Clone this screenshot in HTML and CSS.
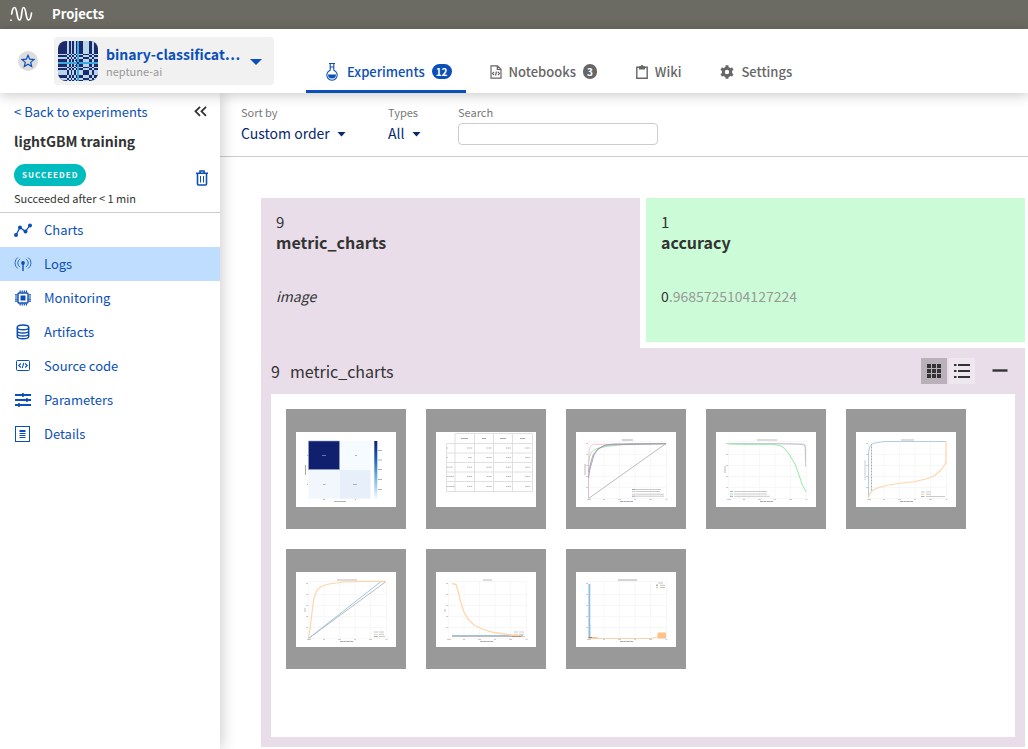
FILE: index.html
```html
<!DOCTYPE html>
<html lang="en">
<head>
<meta charset="utf-8">
<meta name="viewport" content="width=device-width, initial-scale=1">
<title>lightGBM training - Logs</title>
<link rel="stylesheet" href="styles.css">
</head>
<body>
<svg class="defs" aria-hidden="true">
  <defs>
    <linearGradient id="blues" x1="0" y1="0" x2="0" y2="1">
      <stop offset="0" stop-color="#10206e"/><stop offset=".3" stop-color="#1460b4"/><stop offset=".6" stop-color="#69aee0"/><stop offset="1" stop-color="#f5faff"/>
    </linearGradient>
    <symbol id="axes" viewBox="0 0 100 75">
      <path d="M12.5 9.5H90.5V66.5H12.5ZM28 9.5V66.5M43.5 9.5V66.5M59 9.5V66.5M74.500 9.5V66.5M12.5 22.500H90.5M12.5 33.500H90.5M12.5 44.500H90.5M12.5 55.500H90.5" fill="none" stroke="#f5f5f5" stroke-width=".8"/>
      <path d="M10 11.500h2M10 22.500h2M10 33.500h2M10 44.500h2M10 55.500h2M11 67.500h4M27 67.500h2M42 67.500h3M58 67.500h2M73 67.500h3M89.500 67.500h2" stroke="#ccc" stroke-width="1"/>
      <path d="M44 69.500h13" stroke="#aaa" stroke-dasharray="3 .4"/>
    </symbol>
  </defs>
</svg>
<header class="topbar">
  <svg class="brand" viewBox="0 0 24 16" aria-hidden="true"><path d="M2 14v.2M2.700 8C3.200 4 4 1.500 5.500 1.500C8.500 1.500 7.500 14 10.500 14C13.500 14 12 1.500 14.500 1.500C17.500 1.500 16.500 14 19.500 14C21.500 14 22 11 22.500 7" fill="none" stroke="#fff" stroke-width="1.700" stroke-linecap="round"/></svg>
  <a class="topbar-link" href="#">Projects</a>
</header>
<nav class="project-bar">
  <button class="star" aria-label="Star project"><svg width="14" height="14" viewBox="0 0 14 14"><path d="M7 1.300L8.700 5.200L12.900 5.600L9.700 8.400L10.700 12.500L7 10.300L3.300 12.500L4.300 8.400L1.100 5.600L5.300 5.200Z" fill="none" stroke="#0b4fb8" stroke-width="1.200"/></svg></button>
  <button class="project">
    <svg class="avatar" viewBox="0 0 40 40" aria-hidden="true">
      <rect width="40" height="40" fill="#1b2a6b"/>
      <path fill="#b9d5ea" fill-rule="evenodd" d="M9 0h2v40h-2zM13 0h1v40h-1zM16 0h2v40h-2zM25 0h6v40h-6zM34 0h2v40h-2zM0 13h40v1h-40zM0 16h40v2h-40zM0 26h40v1h-40zM0 29h40v5h-40zM0 37h40v2h-40z"/>
      <path fill="#3ba9dd" d="M19 0h2v40h-2zM0 21h40v2h-40z"/>
      <path stroke="#1b2a6b" d="M17 19L23 25M23 19L17 25"/>
    </svg>
    <span class="project-text"><span class="project-name">binary-classificat…</span><span class="project-org">neptune-ai</span></span>
    <span class="caret"></span>
  </button>
  <div class="tabs">
    <a class="tab active" href="#"><svg width="16" height="20" viewBox="0 0 16 20"><path d="M5 1.500h6M6.200 1.500v6.700a5.200 5.200 0 1 0 3.600 0V1.500M6.500 5h3" fill="none" stroke="currentColor" stroke-width="1.100"/><path d="M4 12.500h8a4 4 0 0 1-8 0z" fill="currentColor"/></svg><span>Experiments</span><span class="badge">12</span></a>
    <a class="tab" href="#"><svg width="12" height="14" viewBox="0 0 12 14"><path d="M1 .8h6.500L11 4.300V13.200H1zM7.300 1v3.500H11M4 7L2.600 8.500L4 10M8 7L9.400 8.500L8 10M6.500 6.500L5.500 10.500" fill="none" stroke="currentColor" stroke-width="1.200"/></svg><span>Notebooks</span><span class="badge">3</span></a>
    <a class="tab" href="#"><svg width="12" height="14" viewBox="0 0 12 14"><path d="M.8 2.200h10.400v11H.8z" fill="none" stroke="currentColor" stroke-width="1.400"/><path d="M3 1.300h1.700a1.300 1.300 0 0 1 2.600 0H9V4.500H3z" fill="currentColor"/></svg><span>Wiki</span></a>
    <a class="tab" href="#"><svg width="14" height="14" viewBox="0 0 14 14"><g fill="none" stroke="currentColor"><circle cx="7" cy="7" r="3.700" stroke-width="3"/><path d="M7 .3v2.200M7 11.500v2.200M1.200 3.650l1.900 1.100M10.900 9.250l1.900 1.100M1.200 10.350l1.900-1.100M10.900 4.750l1.900-1.100" stroke-width="3"/></g></svg><span>Settings</span></a>
  </div>
</nav>
<div class="layout">
  <aside class="sidebar">
    <div class="run">
      <div class="row"><a class="back" href="#">&lt; Back to experiments</a><button class="icon-btn" aria-label="Collapse sidebar"><svg width="14" height="12" viewBox="0 0 14 12"><path d="M6 .8L1.500 5.300L6 9.800M12 .8L7.500 5.300L12 9.800" fill="none" stroke="#333" stroke-width="1.800"/></svg></button></div>
      <h1>lightGBM training</h1>
      <div class="row"><span class="status">SUCCEEDED</span><button class="icon-btn delete" aria-label="Delete"><svg width="12" height="16" viewBox="0 0 12 16"><path d="M0 3.200h12M4 2.800V1h4v1.800M1.500 3.500V14q0 1 1 1h7q1 0 1-1V3.500" fill="none" stroke="#0b4fb8" stroke-width="1.600"/><path d="M4.500 6v6.500M7.500 6v6.500" stroke="#0b4fb8"/></svg></button></div>
      <p>Succeeded after &lt; 1 min</p>
    </div>
    <nav class="menu">
      <a href="#"><svg viewBox="0 0 18 16"><path d="M2 13L6 5.500L11.500 9.500L16 3" fill="none" stroke="currentColor" stroke-width="1.300"/><g fill="currentColor"><circle cx="2" cy="13" r="2"/><circle cx="6" cy="5.500" r="2"/><circle cx="11.500" cy="9.500" r="2"/><circle cx="16" cy="3.500" r="2"/></g></svg><span>Charts</span></a>
      <a class="current" href="#"><svg viewBox="0 0 18 16"><circle cx="9" cy="7" r="1.900" fill="currentColor"/><path d="M9 7v8" stroke="currentColor" stroke-width="1.400"/><path d="M6.200 11a4.500 4.500 0 0 1 0-8M11.800 11a4.500 4.500 0 0 0 0-8M3.800 12.500a6.800 6.800 0 0 1 0-11M14.200 12.500a6.800 6.800 0 0 0 0-11" fill="none" stroke="currentColor" stroke-width=".8"/></svg><span>Logs</span></a>
      <a href="#"><svg viewBox="0 0 18 16"><path d="M6.500 5.500h5v5h-5z" fill="currentColor"/><rect x="4" y="3" width="10" height="10" rx="1" fill="none" stroke="currentColor" stroke-width="1.400"/><path d="M5.500 1.500h7.500M5.500 14.500h7.500" stroke="currentColor" stroke-width="2" stroke-dasharray="1.200 .9"/><path d="M2.300 4.300v8M15.700 4.300v8" stroke="currentColor" stroke-width="2.600" stroke-dasharray="1.200 .9"/></svg><span>Monitoring</span></a>
      <a href="#"><svg viewBox="0 0 18 16"><g fill="none" stroke="currentColor" stroke-width="1.500"><ellipse cx="9" cy="3.400" rx="5.700" ry="2.300"/><path d="M3.300 3.400v9.200c0 3 11.400 3 11.400 0V3.400M3.300 6.700c0 3 11.400 3 11.400 0M3.300 9.700c0 3 11.400 3 11.400 0"/></g></svg><span>Artifacts</span></a>
      <a href="#"><svg viewBox="0 0 18 16"><rect x="2.500" y="2.500" width="13" height="10" rx="1" fill="none" stroke="currentColor"/><path d="M6.800 5.500L4.800 7.500L6.800 9.500M11.200 5.500L13.200 7.500L11.200 9.500M9.800 4.800L8.200 10.200" fill="none" stroke="currentColor" stroke-width="1.100"/></svg><span>Source code</span></a>
      <a href="#"><svg viewBox="0 0 18 16"><path d="M1 3h16M1 8h16M1 13h16" stroke="currentColor" stroke-width="2"/><path d="M9 1v4M13 6v4M5 11v4" stroke="currentColor" stroke-width="1.600"/></svg><span>Parameters</span></a>
      <a href="#"><svg viewBox="0 0 18 16"><rect x="1.500" y=".5" width="14" height="15" fill="none" stroke="currentColor"/><path d="M5.500 5h6" stroke="currentColor" stroke-width="2"/><path d="M5.500 7.500h6M5.500 9.500h6M5.500 11.500h6" stroke="currentColor"/></svg><span>Details</span></a>
    </nav>
  </aside>
  <main>
    <form class="filters">
      <div class="field"><label for="sort">Sort by</label><div class="select"><select id="sort"><option>Custom order</option></select><span class="caret small"></span></div></div>
      <div class="field types"><label for="types">Types</label><div class="select"><select id="types"><option>All</option></select><span class="caret small"></span></div></div>
      <div class="field"><label for="search">Search</label><input id="search" type="text"></div>
    </form>
    <div class="content">
      <div class="cards">
        <section class="card open"><span class="count">9</span><h2>metric_charts</h2><em>image</em></section>
        <section class="card green"><span class="count">1</span><h2>accuracy</h2><span class="value">0<small>.9685725104127224</small></span></section>
      </div>
      <section class="panel">
        <div class="panel-head">
          <h3><span>9</span><span>metric_charts</span></h3>
          <button class="view on" aria-label="Grid view"><svg width="14" height="14" viewBox="0 0 14 14"><path d="M0 0h4v4H0zM5 0h4v4H5zM10 0h4v4h-4zM0 5h4v4H0zM5 5h4v4H5zM10 5h4v4h-4zM0 10h4v4H0zM5 10h4v4H5zM10 10h4v4h-4z" fill="#333"/></svg></button>
          <button class="view" aria-label="List view"><svg width="16" height="14" viewBox="0 0 16 14"><path d="M0 1h2.500M4 1h12M0 7h2.500M4 7h12M0 13h2.500M4 13h12" stroke="#333" stroke-width="2"/></svg></button>
          <button class="minimize" aria-label="Minimize"><svg width="16" height="4" viewBox="0 0 16 4"><path d="M.5 1.500h15" stroke="#333" stroke-width="2.400"/></svg></button>
        </div>
        <div class="tiles">
          <button class="tile" aria-label="Confusion matrix"><svg viewBox="0 0 100 75"><path d="M12.500 9H43.500V37.500H12.500z" fill="#10206e" stroke="#8fa3cc" stroke-width=".6"/><path d="M44 9h30.500v29H44z" fill="#f5fbff"/><path d="M12.500 38H44v28.700H12.500z" fill="#f2f7fe"/><path d="M44 38h30.500v28.700H44z" fill="#e7effa"/><rect x="78.300" y="9" width="3" height="58" fill="url(#blues)"/><path d="M82 18.500h4M82 28h4M82 37.500h4M82 47.500h4M82 57.500h4M38 69.500h12M59 23.500h2M27 52.500h2.500M57 52.500h4M11 23.500h1M11 52.500h1M27 67.500h2M59 67.500h1" stroke="#aaa" stroke-width=".9"/><path d="M26 23.500h4" stroke="#6973a8"/><path d="M9.500 33v10" stroke="#aaa"/></svg></button>
          <button class="tile" aria-label="Classification report"><svg viewBox="0 0 100 75"><path d="M19 1.500H96.500V59.500H10.500V11.500H96.500M10.500 21H96.500M10.500 30.500H96.500M10.500 40H96.500M10.500 49.500H96.500M19 1.500V59.500M38.500 1.500V59.500M57.500 1.500V59.500M76.500 1.500V59.500" fill="none" stroke="#ddd" stroke-width=".9"/><path d="M25 6.500h7M46 6.500h4M64 6.500h6M84 6.500h5" stroke="#aaa"/><path d="M31 16h5.500M50.500 16H56M70 16h5M89 16h5M32 25.500h4M50.500 25.500H56M70 25.500h5M89 25.500h5M31 35.200h5.500M50.500 35.200H56M70 35.200h5M89 35.200h5M31 44.500h5.500M50.500 44.500H56M70 44.500h5M89 44.500h5M31 54.500h5.500M50.500 54.500H56M70 54.500h5M89 54.500h5M11 16h1M11 25.500h1M11 35.200h6M11 44.500h7M11 54.500h8" stroke="#bbb" stroke-dasharray="1.500 .3"/></svg></button>
          <button class="tile" aria-label="ROC curves"><svg viewBox="0 0 100 75"><use href="#axes"/><path d="M46 8h11" stroke="#aaa"/><path d="M9 32v11" stroke="#bbb"/><g fill="none" stroke-width=".8"><path d="M12.500 66.500L90 11.500" stroke="#bbb" stroke-width="1"/><path d="M12.500 66V35C13 22 15 19 20 17C28 14 36 14 42 13L56 11.700H90" stroke="#8fe0a5"/><path d="M12.500 66V30C13 16 14 13 18 12.300L38 12.200L90 11.700" stroke="#f5b5d2"/><path d="M12.500 46L14 37L16 30L18 23L22 17L28 13.500L38 12L90 11.700" stroke="#9b93b8"/><path d="M12.500 40L15 30L17 23L22 17L30 13L90 11.700" stroke="#999"/></g><g stroke-width=".8"><path d="M60 57.500h25M60 59.500h24M60 62.200h28M60 64.200h28" stroke="#bbb"/><path d="M56 57.500h3.500" stroke="#888"/><path d="M56 59.500h3.500" stroke="#8fe0a5"/><path d="M56 62.200h3.500" stroke="#f0a8cb"/><path d="M56 64.200h3.500" stroke="#8a80c8"/></g></svg></button>
          <button class="tile" aria-label="Precision recall curves"><svg viewBox="0 0 100 75"><use href="#axes"/><path d="M41 8h20" stroke="#bbb"/><path d="M9 34v7" stroke="#bbb"/><g fill="none"><path d="M12.500 11.700H58L75 12L86 12.500L89 13.500L89.700 35" stroke="#c3bddd" stroke-width=".8"/><path d="M12.500 11.700H70L88 12L89.500 14V30" stroke="#bbb" stroke-width=".6"/><path d="M12.500 11.700L28 12.300H56L64 13.500L68 16L73 22L79 32L83 43L86 52L88 56L90 60" stroke="#96e9a3"/></g><g stroke-width=".8"><path d="M18 59.500h33M18 62h33M18 64.300h36" stroke="#bbb"/><path d="M14 59.500h3" stroke="#999"/><path d="M14 62h3" stroke="#7ee191"/><path d="M14 64.300h3" stroke="#8a80c8"/></g></svg></button>
          <button class="tile" aria-label="KS statistic"><svg viewBox="0 0 100 75"><use href="#axes"/><path d="M45 8h13" stroke="#bbb"/><path d="M9 28v20" stroke="#ccc"/><g fill="none"><path d="M12.500 66V20L14 14L17 11.500L28 9.500H90" stroke="#b0cfe7"/><path d="M12.500 66L13.500 62L16 59L20 56.500L30 53.500L42 51.500L59 49.500L70 47L78 44L84 39L88 34L90 30V9.500" stroke="#ffd6ac" stroke-width="1.200"/><path d="M15.500 12V59" stroke="#aaa" stroke-dasharray="1 .5"/></g><g stroke-width=".8"><path d="M70 60h5M70 62.300h5M70 64.500h19" stroke="#bbb"/><path d="M65 60h3.500" stroke="#8fbfe0"/><path d="M65 62.300h3.500" stroke="#ffc184"/><path d="M65 64.500h3.500" stroke="#999"/></g></svg></button>
          <button class="tile" aria-label="Cumulative gains"><svg viewBox="0 0 100 75"><use href="#axes"/><path d="M41 8h20" stroke="#bbb"/><path d="M9 36v4" stroke="#bbb"/><g fill="none"><path d="M12.500 66.500L90 9.500" stroke="#bbb"/><path d="M12.500 66.500L85 9.500" stroke="#9cc6e2"/><path d="M12.500 66L14 57L16 40L18 26L21 18L25 14.500L33 12L48 10L68 9.300H90" stroke="#ffd6ac" stroke-width="1.200"/></g><g stroke-width=".8"><path d="M83 60h5M83 62.300h5M83 64.500h6" stroke="#bbb"/><path d="M78 60h4" stroke="#8fbfe0"/><path d="M78 62.300h4" stroke="#ffc184"/><path d="M78 64.500h4" stroke="#999"/></g></svg></button>
          <button class="tile" aria-label="Lift curve"><svg viewBox="0 0 100 75"><use href="#axes"/><path d="M47 8h9" stroke="#bbb"/><path d="M9 37v3" stroke="#bbb"/><g fill="none"><path d="M16 64.500H87" stroke="#aaa" stroke-width=".8"/><path d="M16 63.500H87" stroke="#9dc3dc" stroke-width="1.200"/><path d="M16 11.500L20 12.500L22 19L25 31L28 40L32 47L38 53L46 57L58 60.500L72 62.500L87 64.500" stroke="#ffd6ac" stroke-width="1.300"/></g><g stroke-width=".8"><path d="M83 60h5M83 62.300h5M83 64.500h6" stroke="#bbb"/><path d="M78 60h4" stroke="#8fbfe0"/><path d="M78 62.300h4" stroke="#ffc184"/><path d="M76 64.500h9" stroke="#998877"/></g></svg></button>
          <button class="tile" aria-label="Prediction distribution"><svg viewBox="0 0 100 75"><use href="#axes"/><path d="M42 8h19" stroke="#aaa"/><path d="M12.500 12h1.800v54.500h-1.800z" fill="#8fbfe0"/><path d="M14.500 53v13" stroke="#c4ddef" stroke-width=".7"/><path d="M12.500 65h9v1.500h-9zM81.500 60.500H90v6h-8.500z" fill="#ffc184"/><path d="M15 66.500H75L81 65L86 63.500L90 63" fill="none" stroke="#f4c9a0" stroke-width=".8"/><path d="M12.500 65.500H16" stroke="#a77b55"/><path d="M82 11h5M84 13.300h5M84 15.500h5" stroke="#bbb" stroke-width=".9"/><path d="M80 13.300h2" stroke="#8fbfe0" stroke-width="1.500"/><path d="M80 15.500h2" stroke="#ffc184" stroke-width="1.500"/></svg></button>
        </div>
      </section>
    </div>
  </main>
</div>
</body>
</html>
```
FILE: styles.css
```css
* { box-sizing: border-box; }
body {
  margin: 0;
  min-height: 100vh;
  display: flex;
  flex-direction: column;
  background: #fff;
  color: #333;
  font: 14px/20px "Noto Sans CJK SC", "Noto Sans", sans-serif;
}
button, input, select { font: inherit; color: inherit; }
button { border: 0; background: none; padding: 0; cursor: pointer; }
a { text-decoration: none; color: #0b4fb8; }
h1, h2, h3, p { margin: 0; }
svg { display: block; flex: none; }
.defs { position: absolute; width: 0; height: 0; }

.topbar { display: flex; align-items: center; gap: 19px; padding: 4px 9px 5px; background: #6b6b63; }
.brand { width: 24px; height: 16px; }
.topbar-link { color: #fff; font-size: 13px; font-weight: 700; }

.project-bar { position: relative; z-index: 1; display: flex; height: 64px; background: #fff; box-shadow: 0 2px 12px rgba(0, 0, 0, .22); }
.star { align-self: center; display: grid; place-items: center; width: 20px; height: 20px; margin-left: 18px; border-radius: 50%; background: #ddd; }
.project { display: flex; align-items: center; gap: 8px; align-self: center; width: 220px; height: 48px; margin-left: 16px; padding: 0 4px; border-radius: 4px; background: #f1f1f1; text-align: left; }
.avatar { width: 40px; height: 40px; border-radius: 8px; }
.project-text { display: flex; flex-direction: column; width: 136px; }
.project-name { color: #0b4fb8; font-size: 14px; font-weight: 700; line-height: 20px; white-space: nowrap; }
.project-org { color: #999; font-size: 11px; line-height: 14px; }
.caret { width: 12px; height: 6px; margin-top: 2px; background: #0b4fb8; clip-path: polygon(0 0, 100% 0, 50% 100%); }
.caret.small { width: 9px; height: 5px; background: #06286f; }

.tabs { display: flex; }
.tab { display: flex; align-items: center; gap: 7px; padding: 24px 14px 0 18px; border-bottom: 3px solid transparent; color: #666; font-size: 13px; font-weight: 500; }
.tabs { margin-left: 32px; }
.tab + .tab { padding: 24px 15px 0 24px; }
.tab.active { color: #0b4fb8; border-color: #0b4fb8; }
.badge { padding: 0 4px; border-radius: 8px; background: #666; color: #fff; font-size: 10px; font-weight: 700; line-height: 15px; }
.active .badge { background: #0b4fb8; }

.layout { flex: 1; display: grid; grid-template-columns: 220px 1fr; }
.sidebar { box-shadow: 2px 0 14px rgba(0, 0, 0, .2); clip-path: inset(0 -20px 0 0); }
.run { padding: 9px 12px 5px 14px; border-bottom: 1px solid #ccc; }
.row { display: flex; align-items: center; justify-content: space-between; }
.back { font-size: 13px; }
h1 { margin: 9px 0 13px; font-size: 14px; line-height: 20px; }
.status { padding: 0 8px; border-radius: 11px; background: #00bcbf; color: #fff; font-size: 8px; font-weight: 700; line-height: 22px; letter-spacing: 1px; }
.delete { align-self: flex-end; }
.run p { margin-top: 3px; font-size: 11px; line-height: 18px; }
.menu a { display: flex; align-items: center; gap: 12px; height: 34px; padding: 0 14px; font-size: 13px; }
.menu svg { width: 18px; height: 16px; }
.menu .current { background: #bfdeff; }

main { min-width: 0; }
.filters { display: flex; gap: 42px; height: 64px; padding: 10px 21px; border-bottom: 1px solid #ccc; }
.field { display: flex; flex-direction: column; gap: 2px; }
.field label { color: #777; font-size: 11px; line-height: 18px; }
.select { display: flex; align-items: center; gap: 7px; color: #06286f; }
.select select { appearance: none; border: 0; padding: 0; background: none; line-height: 20px; }
.types { margin-right: -5px; }
.field input { width: 200px; height: 22px; border: 1px solid #ccc; border-radius: 4px; background: #fff; }

.content { padding: 41px 3px 2px 41px; }
.cards { display: grid; grid-template-columns: 1fr 1fr; gap: 6px; }
.card { display: flex; flex-direction: column; align-items: flex-start; height: 144px; padding: 13px 15px; line-height: 21px; }
.count { font-size: 15px; }
.card h2 { margin-bottom: 33px; font-size: 16px; line-height: 21px; }
.card.open { height: 150px; background: #e8dde9; }
.card.green { background: #cbfcd7; }
.value small { color: #999; font-size: 14px; }
.panel { padding: 0 10px 10px; background: #e8dde9; }
.panel-head { display: flex; align-items: center; height: 46px; }
.panel-head h3 { display: flex; gap: 10px; flex: 1; font-size: 16px; font-weight: 400; }
.view { display: grid; place-items: center; width: 26px; height: 26px; margin-left: 2px; background: #efe7f0; }
.view.on { background: #b9b0ba; }
.minimize { margin: 0 7px 0 17px; }
.tiles { display: grid; grid-template-columns: repeat(auto-fill, 120px); grid-auto-rows: 120px; align-content: start; gap: 20px; min-height: 343px; padding: 15px; background: #fff; }
.tile { display: grid; place-items: center; background: #999; }
.tile svg { width: 100px; height: 75px; background: #fff; }
```
